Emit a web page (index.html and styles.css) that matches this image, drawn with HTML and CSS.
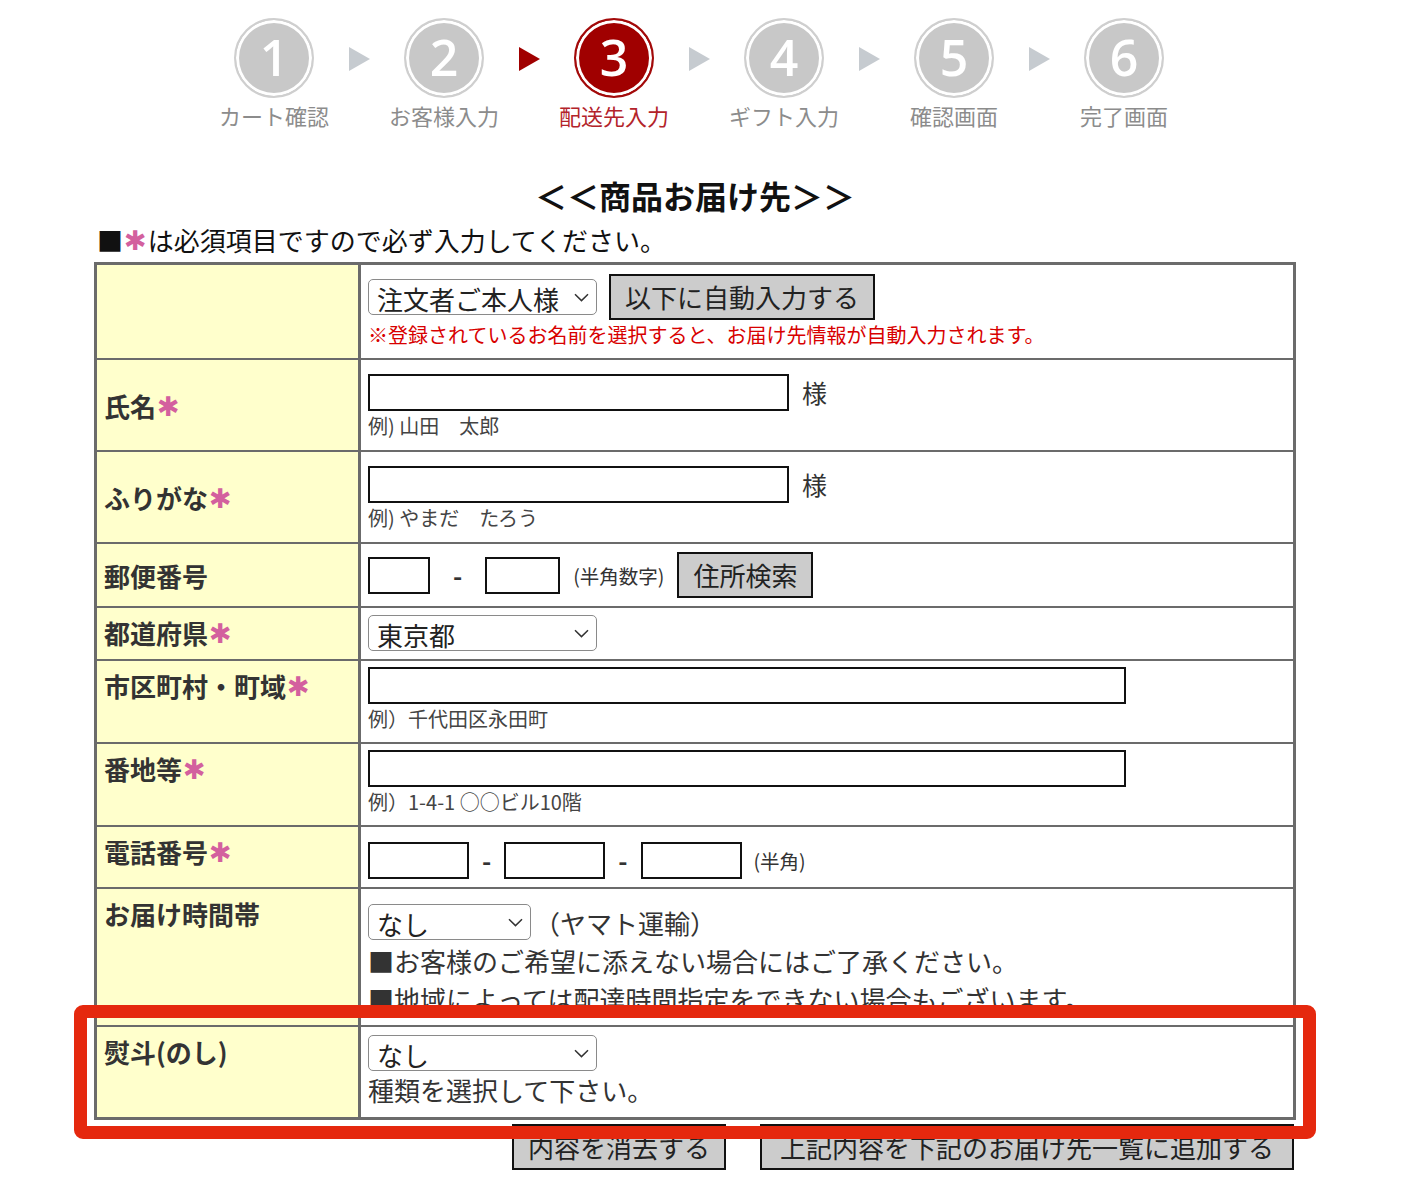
FILE: index.html
```html
<!DOCTYPE html>
<html lang="ja">
<head>
<meta charset="utf-8">
<title>配送先入力</title>
<link rel="stylesheet" href="styles.css">
</head>
<body>
<div class="page">
  <ol class="steps">
    <li class="step"><span class="circle">1</span><span class="step-label">カート確認</span></li>
    <li class="arrow"></li>
    <li class="step"><span class="circle">2</span><span class="step-label">お客様入力</span></li>
    <li class="arrow active"></li>
    <li class="step active"><span class="circle">3</span><span class="step-label">配送先入力</span></li>
    <li class="arrow"></li>
    <li class="step"><span class="circle">4</span><span class="step-label">ギフト入力</span></li>
    <li class="arrow"></li>
    <li class="step"><span class="circle">5</span><span class="step-label">確認画面</span></li>
    <li class="arrow"></li>
    <li class="step"><span class="circle">6</span><span class="step-label">完了画面</span></li>
  </ol>

  <main class="content">
    <h2 class="title">＜＜商品お届け先＞＞</h2>
    <p class="req-note">■<span class="req">✱</span>は必須項目ですので必ず入力してください。</p>

    <div class="form-wrap">
      <table class="form-table">
        <tr>
          <th></th>
          <td class="r1">
            <div class="line h46">
              <span class="sel w229">
                <select><option>注文者ご本人様</option></select>
                <svg class="chev" viewBox="0 0 15 9"><path d="M1 1.3 L7.5 7.6 L14 1.3" /></svg>
              </span>
              <button class="btn" type="button">以下に自動入力する</button>
            </div>
            <p class="note-red">※登録されているお名前を選択すると、お届け先情報が自動入力されます。</p>
          </td>
        </tr>
        <tr>
          <th class="mid">氏名<span class="req">✱</span></th>
          <td class="r2">
            <div class="line h38"><input class="txt w421" type="text"><span class="sama">様</span></div>
            <p class="example">例) 山田　太郎</p>
          </td>
        </tr>
        <tr>
          <th class="mid">ふりがな<span class="req">✱</span></th>
          <td class="r2">
            <div class="line h38"><input class="txt w421" type="text"><span class="sama">様</span></div>
            <p class="example">例) やまだ　たろう</p>
          </td>
        </tr>
        <tr>
          <th class="mid">郵便番号</th>
          <td class="r4">
            <div class="line h46">
              <input class="txt w62" type="text"><span class="dash wide">-</span><input class="txt w75" type="text">
              <span class="small-note">(半角数字)</span>
              <button class="btn" type="button">住所検索</button>
            </div>
          </td>
        </tr>
        <tr>
          <th>都道府県<span class="req">✱</span></th>
          <td class="r5">
            <div class="line h36">
              <span class="sel w229">
                <select><option>東京都</option></select>
                <svg class="chev" viewBox="0 0 15 9"><path d="M1 1.3 L7.5 7.6 L14 1.3" /></svg>
              </span>
            </div>
          </td>
        </tr>
        <tr>
          <th>市区町村・町域<span class="req">✱</span></th>
          <td class="r6">
            <div class="line h38"><input class="txt w758" type="text"></div>
            <p class="example">例）千代田区永田町</p>
          </td>
        </tr>
        <tr>
          <th>番地等<span class="req">✱</span></th>
          <td class="r6">
            <div class="line h38"><input class="txt w758" type="text"></div>
            <p class="example">例）1-4-1 ○○ビル10階</p>
          </td>
        </tr>
        <tr>
          <th>電話番号<span class="req">✱</span></th>
          <td class="r8">
            <div class="line h38">
              <input class="txt w101" type="text"><span class="dash">-</span><input class="txt w101" type="text"><span class="dash">-</span><input class="txt w101" type="text">
              <span class="small-note tight">(半角)</span>
            </div>
          </td>
        </tr>
        <tr>
          <th>お届け時間帯</th>
          <td class="r9">
            <div class="line h40">
              <span class="sel w163">
                <select><option>なし</option></select>
                <svg class="chev" viewBox="0 0 15 9"><path d="M1 1.3 L7.5 7.6 L14 1.3" /></svg>
              </span>
              <span class="carrier">（ヤマト運輸）</span>
            </div>
            <p class="body-line">■お客様のご希望に添えない場合にはご了承ください。</p>
            <p class="body-line">■地域によっては配達時間指定をできない場合もございます。</p>
          </td>
        </tr>
        <tr>
          <th>熨斗(のし)</th>
          <td class="r10">
            <div class="line h36">
              <span class="sel w229">
                <select><option>なし</option></select>
                <svg class="chev" viewBox="0 0 15 9"><path d="M1 1.3 L7.5 7.6 L14 1.3" /></svg>
              </span>
            </div>
            <p class="body-line">種類を選択して下さい。</p>
          </td>
        </tr>
      </table>
      <div class="callout"></div>
    </div>

    <div class="actions">
      <button class="btn" type="button">内容を消去する</button>
      <button class="btn wide" type="button">上記内容を下記のお届け先一覧に追加する</button>
    </div>
  </main>
</div>
</body>
</html>
```

FILE: styles.css
```css
html, body {
  margin: 0;
  padding: 0;
  background: #fff;
}

body {
  font-family: "Noto Sans CJK JP", "Noto Sans", sans-serif;
  color: #333;
}

.page {
  width: 1406px;
}

/* ---------- progress steps ---------- */
.steps {
  display: flex;
  align-items: flex-start;
  list-style: none;
  margin: 0 0 0 209px;
  padding: 18px 0 0;
  width: 980px;
}

.step {
  width: 130px;
  display: flex;
  flex-direction: column;
  align-items: center;
}

.circle {
  box-sizing: border-box;
  width: 80px;
  height: 80px;
  border-radius: 50%;
  border: 2px solid #cfcfcf;
  box-shadow: inset 0 0 0 3px #fff;
  background: #c8c8c8;
  color: #fff;
  display: flex;
  align-items: center;
  justify-content: center;
  font-family: "Open Sans", "DejaVu Sans", sans-serif;
  font-weight: 600;
  font-size: 50px;
  line-height: 1;
  padding-bottom: 2px;
}

.step-label {
  margin-top: 2px;
  font-size: 22px;
  line-height: 30px;
  color: #8c8c8c;
  white-space: nowrap;
}

.step.active .circle {
  border-color: #a30a0a;
  background: #a00000;
}

.step.active .step-label {
  color: #b3232a;
}

.arrow {
  width: 40px;
  display: flex;
  justify-content: center;
  padding-top: 29px;
}

.arrow::before {
  content: "";
  width: 0;
  height: 0;
  border-left: 21px solid #c6cbd0;
  border-top: 12px solid transparent;
  border-bottom: 12px solid transparent;
}

.arrow.active::before {
  border-left-color: #a00000;
}

/* ---------- content ---------- */
.content {
  width: 1202px;
  margin-left: 94px;
}

.title {
  margin: 45px 0 0;
  text-align: center;
  font-size: 32px;
  line-height: 40px;
  font-weight: bold;
  color: #111;
}

.req-note {
  margin: 9px 0 0 3px;
  font-size: 26px;
  line-height: 32px;
  color: #111;
  white-space: nowrap;
}

.req {
  font-family: "DejaVu Sans", sans-serif;
  font-weight: bold;
  font-size: 27px;
  line-height: 0;
  color: #d3609e;
  margin: 0 1px 0 1px;
  position: relative;
  top: -1px;
}

/* ---------- form table ---------- */
.form-wrap {
  position: relative;
  margin-top: 6px;
}

.form-table {
  box-sizing: border-box;
  width: 100%;
  border: 3px solid #6b6b6b;
  border-collapse: separate;
  border-spacing: 0;
}

.form-table th {
  box-sizing: border-box;
  width: 264px;
  background: #ffffcc;
  border-right: 3px solid #6b6b6b;
  border-bottom: 2px solid #6b6b6b;
  padding: 6px 7px;
  text-align: left;
  vertical-align: top;
  font-size: 26px;
  line-height: 37px;
  font-weight: bold;
  color: #333;
  white-space: nowrap;
}

.form-table th.mid {
  vertical-align: middle;
}

.form-table td {
  border-bottom: 2px solid #6b6b6b;
  padding: 8px 7px;
  vertical-align: top;
  background: #fff;
}

.form-table tr:last-child > th,
.form-table tr:last-child > td {
  border-bottom: 0;
}

.form-table td.r1 { padding: 9px 7px 8px; }
.form-table td.r2 { padding: 13px 7px 9px; }
.form-table td.r4 { padding: 8px 7px; }
.form-table td.r5 { padding: 7px 7px 8px; }
.form-table td.r6 { padding: 5px 7px 8px; }
.form-table td.r8 { padding: 14px 7px 8px; }
.form-table td.r9 { padding: 13px 7px 7px; }
.form-table td.r10 { padding: 8px 7px 8px; }

.line {
  display: flex;
  align-items: center;
}

.h36 { height: 36px; }
.h38 { height: 38px; }
.h40 { height: 40px; }
.h46 { height: 46px; }

.r1 .line { gap: 12px; }

.note-red {
  margin: 0;
  font-size: 20px;
  line-height: 30px;
  color: #d80000;
  white-space: nowrap;
}

.example {
  margin: 0;
  font-size: 20px;
  line-height: 30px;
  color: #444;
  white-space: nowrap;
}

.body-line {
  margin: 0;
  font-size: 26px;
  line-height: 38px;
  color: #333;
  white-space: nowrap;
}

.sama {
  margin-left: 13px;
  font-size: 25px;
  color: #333;
}

.carrier {
  margin-left: 3px;
  font-size: 26px;
  color: #333;
}

.dash {
  margin: 0 13px;
  font-size: 25px;
  font-weight: bold;
  color: #333;
}

.dash.wide {
  margin: 0 23px;
}

.small-note {
  margin: 0 13px 0 13px;
  font-size: 19.5px;
  color: #333;
  white-space: nowrap;
}

.small-note.tight {
  margin: 0 0 0 12px;
}

/* inputs */
.txt {
  box-sizing: border-box;
  height: 37px;
  border: 2px solid #111;
  border-radius: 0;
  padding: 0 6px;
  background: #fff;
  font-family: inherit;
  font-size: 20px;
  outline: none;
}

.w62 { width: 62px; }
.w75 { width: 75px; }
.w101 { width: 101px; }
.w421 { width: 421px; }
.w758 { width: 758px; }

/* selects */
.sel {
  position: relative;
  display: inline-block;
  height: 36px;
}

.sel.w229 { width: 229px; }
.sel.w163 { width: 163px; }

.sel select {
  -webkit-appearance: none;
  appearance: none;
  box-sizing: border-box;
  width: 100%;
  height: 36px;
  margin: 0;
  border: 1px solid #8a8a8a;
  border-radius: 5px;
  background: #fff;
  padding: 0 28px 0 8px;
  font-family: inherit;
  font-size: 26px;
  color: #222;
}

.chev {
  position: absolute;
  right: 8px;
  top: 14px;
  width: 15px;
  height: 9px;
  pointer-events: none;
}

.chev path {
  fill: none;
  stroke: #333;
  stroke-width: 1.5;
}

/* buttons */
.btn {
  box-sizing: border-box;
  height: 46px;
  padding: 0 14px;
  margin: 0;
  border: 2px solid #111;
  border-radius: 0;
  background: #cccccc;
  font-family: inherit;
  font-size: 26px;
  line-height: 1;
  color: #222;
  white-space: nowrap;
}

.btn.wide {
  padding: 0 18px;
}

.actions {
  display: flex;
  justify-content: flex-end;
  gap: 34px;
  margin: 4px 2px 0 0;
}

/* red highlight frame drawn over the last row */
.callout {
  position: absolute;
  left: -20px;
  right: -20px;
  bottom: -19px;
  height: 134px;
  box-sizing: border-box;
  border: 13px solid #e5280e;
  border-radius: 9px;
  pointer-events: none;
  z-index: 2;
}
```
